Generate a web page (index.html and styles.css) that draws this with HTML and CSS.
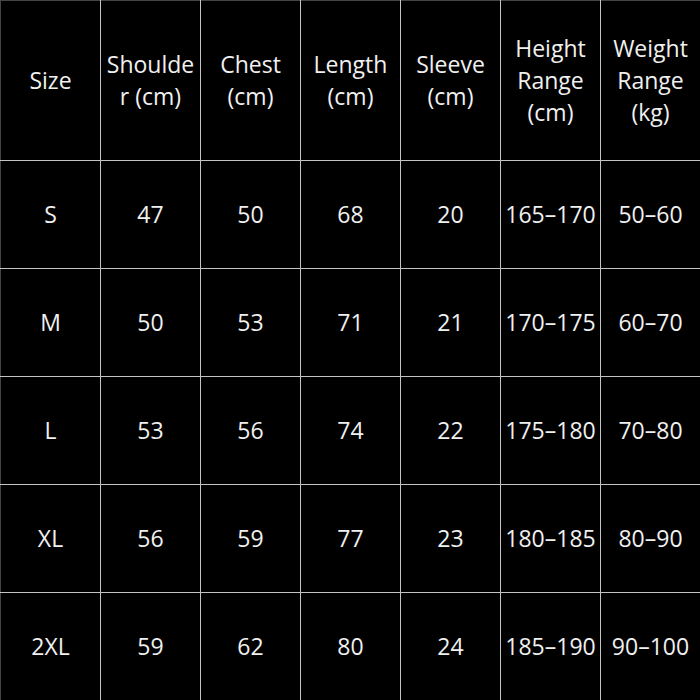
FILE: index.html
```html
<!DOCTYPE html>
<html>
<head>
<meta charset="utf-8">
<link rel="stylesheet" href="styles.css">
</head>
<body>
<table class="chart">
  <colgroup>
    <col class="c"><col class="c"><col class="c"><col class="c"><col class="c"><col class="c"><col class="c">
  </colgroup>
  <thead>
    <tr class="head">
      <th>Size</th>
      <th class="brk">Shoulder (cm)</th>
      <th>Chest<br>(cm)</th>
      <th>Length<br>(cm)</th>
      <th>Sleeve<br>(cm)</th>
      <th>Height<br>Range<br>(cm)</th>
      <th>Weight<br>Range<br>(kg)</th>
    </tr>
  </thead>
  <tbody>
    <tr><td>S</td><td>47</td><td>50</td><td>68</td><td>20</td><td>165–170</td><td>50–60</td></tr>
    <tr><td>M</td><td>50</td><td>53</td><td>71</td><td>21</td><td>170–175</td><td>60–70</td></tr>
    <tr><td>L</td><td>53</td><td>56</td><td>74</td><td>22</td><td>175–180</td><td>70–80</td></tr>
    <tr><td>XL</td><td>56</td><td>59</td><td>77</td><td>23</td><td>180–185</td><td>80–90</td></tr>
    <tr><td>2XL</td><td>59</td><td>62</td><td>80</td><td>24</td><td>185–190</td><td>90–100</td></tr>
  </tbody>
</table>
</body>
</html>
```

FILE: styles.css
```css
html, body {
  margin: 0;
  padding: 0;
  background: #000;
}
.chart {
  width: 700px;
  height: 700px;
  border-collapse: collapse;
  table-layout: fixed;
  font-family: "Open Sans", "Noto Sans", sans-serif;
  font-size: 23px;
  line-height: 32px;
  color: #f0f0f0;
}
.chart .c {
  width: 100px;
}
.chart th, .chart td {
  border: 1px solid #c4c4c4;
  padding: 0 0 2px;
  text-align: center;
  vertical-align: middle;
  font-weight: normal;
  white-space: nowrap;
  overflow: hidden;
}
.chart .head th {
  height: 157px;
}
.chart .brk {
  white-space: normal;
  word-break: break-all;
  padding: 0 3px 2px;
}
.chart tbody td {
  height: 105px;
}
.chart tr:first-child th {
  border-top-color: #444;
}
.chart th:first-child, .chart td:first-child {
  border-left-color: #444;
}
.chart th:last-child, .chart td:last-child {
  border-right-color: #666;
}
.chart tbody tr:last-child td {
  border-bottom-color: #444;
}
```
